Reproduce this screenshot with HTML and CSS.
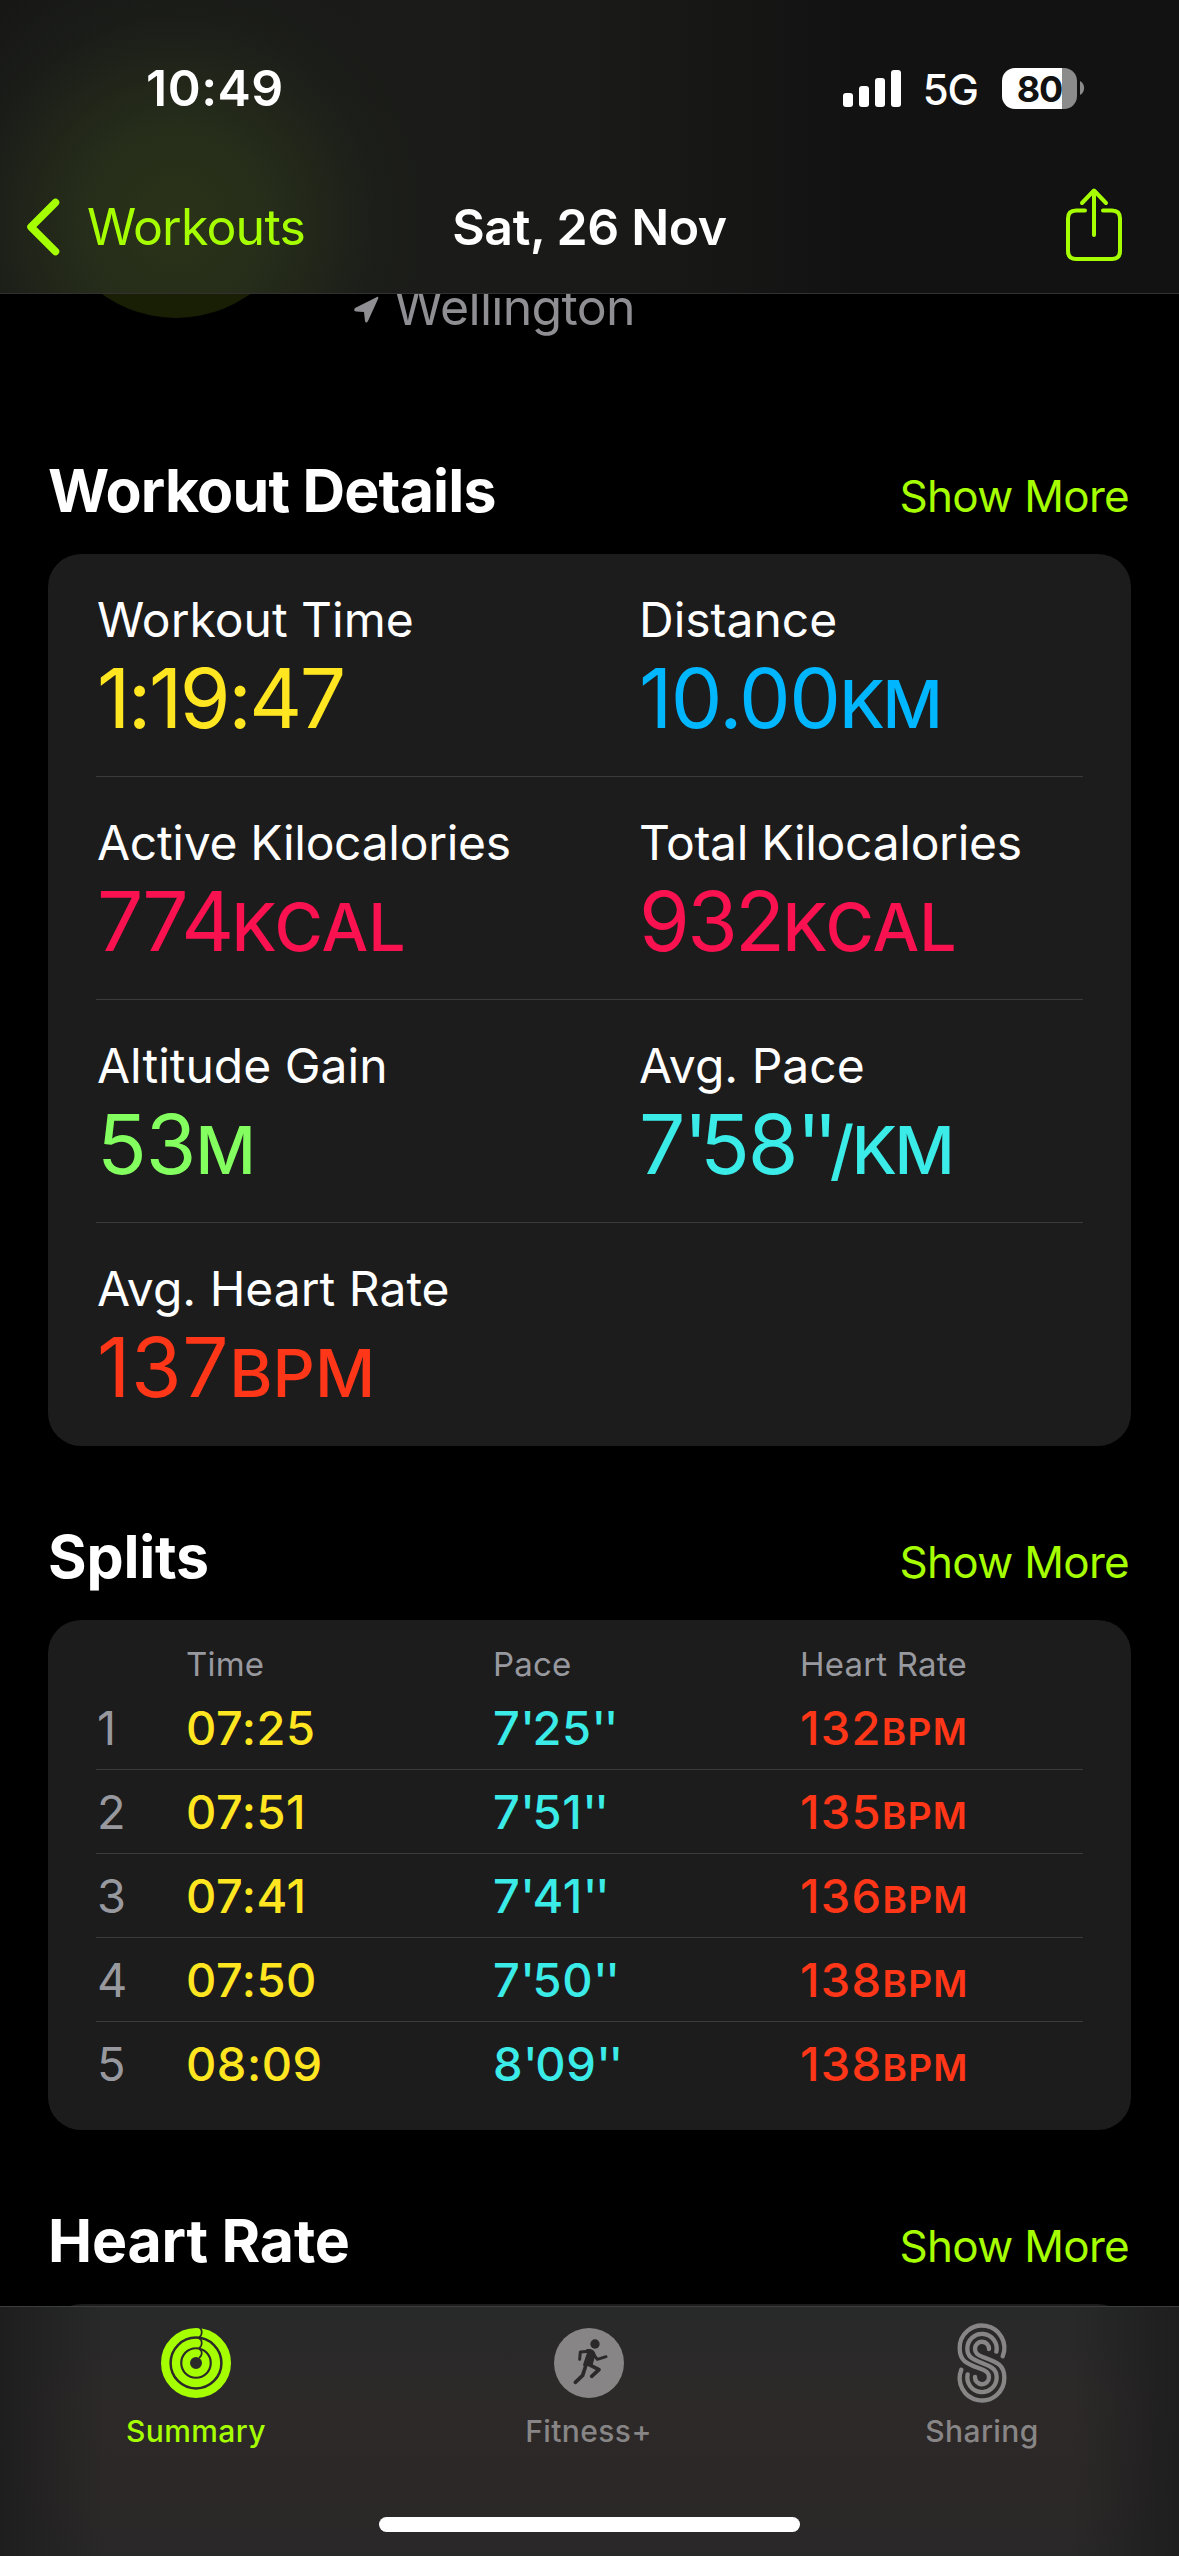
FILE: index.html
```html
<!DOCTYPE html>
<html lang="en">
<head>
    <meta charset="UTF-8">
    <meta name="viewport" content="width=device-width, initial-scale=1.0">
    <title>Workout Summary</title>
    <link rel="stylesheet" href="styles.css">
</head>
<body>
    <div class="topBar">
        <div class="statusBar">
            <span class="clock">10:49</span>
            <div class="statusIcons">
                <svg class="signal" viewBox="0 0 58 38">
                    <rect x="0" y="24" width="10" height="14" rx="3"/>
                    <rect x="16" y="17" width="10" height="21" rx="3"/>
                    <rect x="32" y="9" width="10" height="29" rx="3"/>
                    <rect x="48" y="1" width="10" height="37" rx="3"/>
                </svg>
                <span class="network">5G</span>
                <div class="battery"><span>80</span></div>
                <svg class="batteryTip" viewBox="0 0 4 14"><path d="M0 0 C5.500 3 5.500 11 0 14 Z"/></svg>
            </div>
        </div>
        <div class="navBar">
            <a class="back">
                <svg viewBox="0 0 34 58"><path d="M29.500 4.500 L5 29 L29.500 53.500"/></svg>
                <span>Workouts</span>
            </a>
            <h1>Sat, 26 Nov</h1>
            <svg class="share" viewBox="0 0 58 76">
                <path d="M20 23.500 H11 Q3 23.500 3 31.500 V64 Q3 72 11 72 H47 Q55 72 55 64 V31.500 Q55 23.500 47 23.500 H38"/>
                <path d="M29 48 V4 M17 16 L29 3.500 L41 16"/>
            </svg>
        </div>
    </div>

    <div class="container">
        <div class="location">
            <div class="badge"></div>
            <svg viewBox="0 0 26 28"><path d="M24 1 L2 12 Q0 15 3 15.500 L11 16 L12 25 Q13 28 15 25 L25 3 Q26 0 24 1 Z"/></svg>
            <span>Wellington</span>
        </div>

        <div class="heading">
            <h2 class="detailsTitle">Workout Details</h2>
            <a>Show More</a>
        </div>
        <div class="card details">
            <div class="row">
                <div><p class="label">Workout Time</p><p class="value yellow">1:19:47</p></div>
                <div><p class="label">Distance</p><p class="value blue">10.00<small>KM</small></p></div>
            </div>
            <div class="row">
                <div><p class="label kcal">Active Kilocalories</p><p class="value pink">774<small>KCAL</small></p></div>
                <div><p class="label kcal">Total Kilocalories</p><p class="value pink">932<small>KCAL</small></p></div>
            </div>
            <div class="row">
                <div><p class="label">Altitude Gain</p><p class="value green">53<small>M</small></p></div>
                <div><p class="label">Avg. Pace</p><p class="value cyan">7<i>'</i>58<i>''</i><small>/KM</small></p></div>
            </div>
            <div class="row">
                <div><p class="label">Avg. Heart Rate</p><p class="value red">137<small>BPM</small></p></div>
            </div>
        </div>

        <div class="heading">
            <h2>Splits</h2>
            <a>Show More</a>
        </div>
        <div class="card splits">
            <div class="splitHead"><span></span><span>Time</span><span>Pace</span><span>Heart Rate</span></div>
            <div class="split"><span class="index">1</span><span class="yellow">07:25</span><span class="cyan">7<i>'</i>25<i>''</i></span><span class="red">132<small>BPM</small></span></div>
            <div class="split"><span class="index">2</span><span class="yellow">07:51</span><span class="cyan">7<i>'</i>51<i>''</i></span><span class="red">135<small>BPM</small></span></div>
            <div class="split"><span class="index">3</span><span class="yellow">07:41</span><span class="cyan">7<i>'</i>41<i>''</i></span><span class="red">136<small>BPM</small></span></div>
            <div class="split"><span class="index">4</span><span class="yellow">07:50</span><span class="cyan">7<i>'</i>50<i>''</i></span><span class="red">138<small>BPM</small></span></div>
            <div class="split"><span class="index">5</span><span class="yellow">08:09</span><span class="cyan">8<i>'</i>09<i>''</i></span><span class="red">138<small>BPM</small></span></div>
        </div>

        <div class="heading">
            <h2>Heart Rate</h2>
            <a>Show More</a>
        </div>
        <div class="card chart"></div>
    </div>

    <div class="tabBar">
        <div class="tabs">
            <div class="tab active">
                <!-- three closed activity rings -->
                <svg viewBox="-120 -120 240 240">
                    <g class="rings">
                        <circle r="92.500" stroke-width="25"/>
                        <circle r="60" stroke-width="25"/>
                        <circle r="29.500" stroke-width="23"/>
                    </g>
                    <g class="seams">
                        <path d="M9 -108 C20 -101 20 -84 9 -77"/>
                        <path d="M9 -74 C20 -69 20 -52 9 -45"/>
                        <path d="M9 -43 C20 -38 20 -22 9 -15"/>
                    </g>
                </svg>
                <span>Summary</span>
            </div>
            <div class="tab">
                <svg viewBox="-120 -120 240 240">
                    <circle r="105"/>
                    <g class="runner">
                        <circle cx="18" cy="-57" r="14"/>
                        <path class="body" d="M-6 -40 Q14 -42 18 -26 L8 8 L-16 6 L-4 -30 Z"/>
                        <path d="M-28 -11 L-26 -33 L0 -35"/>
                        <path d="M12 -28 L25 -11 L51 -19"/>
                        <path class="leg" d="M-1 4 L30 20 L8 40"/>
                        <path class="leg" d="M-9 6 L-19 37 L-41 58"/>
                    </g>
                </svg>
                <span>Fitness+</span>
            </div>
            <div class="tab">
                <svg viewBox="-120 -120 240 240">
                    <g class="swirl">
                        <path d="M62 -20 A67 67 0 1 0 -67 -43.500 C-67 -4 -42 3 -4 17.500 C14 24 21 30 21 43.500 A21 21 0 0 1 -21 42"/>
                        <path d="M43 -34 A44 44 0 1 0 -44 -43.500 C-44 -20 -32 -12 0 0 C32 12 44 20 44 43.500 A44 44 0 1 1 -43 34"/>
                        <path d="M21 -42 A21 21 0 0 0 -21 -43.500 C-21 -30 -14 -24 4 -17.500 C42 -3 67 4 67 43.500 A67 67 0 1 1 -62 20"/>
                    </g>
                </svg>
                <span>Sharing</span>
            </div>
        </div>
        <div class="homeIndicator"></div>
    </div>
</body>
</html>
```
FILE: styles.css
```css
*{
    margin: 0px;
    padding: 0px;
    box-sizing: border-box;
}
body{
    width: 1179px;
    height: 2556px;
    overflow: hidden;
    background-color: black;
    color: white;
    font-family: Inter, "Liberation Sans", sans-serif;
}
svg{
    display: block;
    overflow: visible;
}

/* header */
.topBar{
    position: fixed;
    top: 0px;
    left: 0px;
    z-index: 2;
    width: 1179px;
    height: 294px;
    border-bottom: 1px solid #303130;
    background: radial-gradient(ellipse 270px 270px at 176px 220px, #2a3318 0%, #262d1a 35%, rgba(29, 31, 26, 0.6) 75%, transparent 100%),
                linear-gradient(90deg, #171816 0px, #1b1c19 420px, #191a18 620px, #121212 850px);
}
.statusBar{
    display: flex;
    justify-content: space-between;
    height: 160px;
    padding: 57px 95px 0px 146px;
}
.clock{
    font-size: 50px;
    font-weight: 600;
    line-height: 62px;
    letter-spacing: 0.5px;
}
.statusIcons{
    display: flex;
    align-items: center;
    height: 62px;
}
.signal{
    width: 58px;
    height: 38px;
    fill: white;
}
.network{
    margin: 3px 24px 0px 22px;
    font-size: 42px;
    font-weight: 500;
    letter-spacing: -1px;
}
.battery{
    width: 75px;
    height: 41px;
    border-radius: 13px;
    background: linear-gradient(90deg, white 60px, #8b8b8b 60px);
    color: #121212;
    font-size: 36px;
    font-weight: 700;
    line-height: 42px;
    text-align: center;
    letter-spacing: -1px;
}
.batteryTip{
    width: 4px;
    height: 14px;
    margin-left: 3px;
    fill: #8b8b8b;
}
.navBar{
    display: grid;
    grid-template-columns: 1fr auto 1fr;
    align-items: center;
    height: 133px;
    padding: 0px 26px;
}
.back{
    display: flex;
    align-items: center;
    color: #a6ff00;
    font-size: 50px;
    line-height: 62px;
    letter-spacing: -0.8px;
}
.back svg{
    width: 34px;
    height: 58px;
    margin-right: 27px;
    fill: none;
    stroke: #a6ff00;
    stroke-width: 7.5;
    stroke-linecap: round;
    stroke-linejoin: round;
}
h1{
    font-size: 50px;
    font-weight: 600;
    line-height: 62px;
    letter-spacing: -0.4px;
}
.share{
    justify-self: end;
    width: 58px;
    height: 76px;
    margin: 0px 30px 3px 0px;
    fill: none;
    stroke: #a6ff00;
    stroke-width: 4;
    stroke-linecap: round;
    stroke-linejoin: round;
}

/* page content, scrolled up behind the header */
.container{
    padding: 191px 48px 0px 48px;
}
.location{
    display: flex;
    height: 189px;
    color: #8e8e93;
    font-size: 50px;
    letter-spacing: -0.7px;
}
.location .badge{
    width: 254px;
    height: 127px;
    margin-left: 1px;
    border-radius: 0px 0px 127px 127px;
    background-color: #181f04;
}
.location svg{
    width: 26px;
    height: 28px;
    margin: 105px 15px 0px 50px;
    fill: #8e8e93;
}
.location span{
    margin-top: 85px;
    line-height: 62px;
}
.heading{
    display: flex;
    justify-content: space-between;
    align-items: baseline;
    height: 174px;
    padding: 76px 2px 0px 0px;
}
h2{
    font-size: 59px;
    font-weight: 700;
    line-height: 70px;
    letter-spacing: -0.2px;
}
.detailsTitle{
    letter-spacing: -0.8px;
}
.heading a{
    color: #a6ff00;
    font-size: 44px;
    letter-spacing: -0.7px;
}
.card{
    border-radius: 33px;
    background-color: #1c1c1c;
    padding: 0px 48px;
}
.row{
    display: grid;
    grid-template-columns: 542px 1fr;
    height: 223px;
    padding-top: 36px;
    border-bottom: 1px solid #3b3b3b;
}
.row:last-child{
    border-bottom: none;
}
.label{
    padding-left: 1px;
    font-size: 48px;
    line-height: 60px;
}
.kcal{
    letter-spacing: -0.3px;
}
.value{
    margin-top: 4px;
    padding-left: 1px;
    font-size: 82px;
    line-height: 90px;
}
.value small{
    font-size: 66px;
    font-weight: 500;
    letter-spacing: 0px;
}
.yellow{
    color: #ffe620;
}
.blue{
    color: #00b7ff;
}
.pink{
    color: #fa114f;
}
.green{
    color: #83ff5f;
}
.cyan{
    color: #3aebe7;
}
.red{
    color: #ff3617;
}
/* minute and second marks sit close to the digits */
i{
    font-style: normal;
}
.value.yellow{
    letter-spacing: -2.5px;
}
.value.blue{
    letter-spacing: -1.5px;
}
.value.pink{
    letter-spacing: -2.7px;
}
.value.green{
    letter-spacing: -1px;
}
.value.cyan{
    letter-spacing: -2px;
}
.value.red{
    letter-spacing: 0.6px;
}
.value.cyan i{
    letter-spacing: -8px;
}
.value.blue small , .value.cyan small{
    letter-spacing: -2.5px;
}

/* splits table */
.splits{
    height: 510px;
    padding-top: 24px;
}
.splitHead , .split{
    display: grid;
    grid-template-columns: 90px 307px 307px 1fr;
}
.splitHead{
    height: 42px;
    color: #98989f;
    font-size: 33px;
    line-height: 40px;
    letter-spacing: 0.2px;
}
.split{
    height: 84px;
    border-bottom: 1px solid #3b3b3b;
    font-size: 47px;
    font-weight: 500;
    line-height: 84px;
    letter-spacing: 0.5px;
}
.split:last-child{
    border-bottom: none;
}
.split i{
    letter-spacing: -2.5px;
}
.split .red{
    letter-spacing: 1.3px;
}
.split small{
    font-size: 37px;
    font-weight: 600;
}
.index{
    padding-left: 1px;
    color: #98989f;
    font-weight: 400;
}
.chart{
    height: 240px;
}

/* bottom tabs */
.tabBar{
    position: fixed;
    top: 2306px;
    left: 0px;
    z-index: 2;
    width: 1179px;
    height: 250px;
    border-top: 1px solid #3d3d3d;
    background: linear-gradient(90deg, rgba(29, 29, 29, 0.9) 0%, transparent 9%, transparent 91%, rgba(29, 29, 29, 0.9) 100%),
                linear-gradient(180deg, #282929 0%, #2d2929 40%, #2c2828 75%, #292828 100%);
}
.tabs{
    display: grid;
    grid-template-columns: 392px 393px 394px;
    height: 210px;
    padding-top: 16px;
}
.tab{
    display: flex;
    flex-direction: column;
    align-items: center;
    color: #878585;
    fill: #878585;
    font-size: 30px;
    font-weight: 500;
    line-height: 40px;
    letter-spacing: 0.4px;
}
.tab svg{
    width: 80px;
    height: 80px;
}
.tab span{
    margin-top: 8px;
}
.active{
    color: #a6ff00;
}
.rings{
    fill: none;
    stroke: #a6ff00;
}
.seams{
    fill: none;
    stroke: #2a2828;
    stroke-width: 5;
}
.runner{
    fill: #2b2929;
    stroke: none;
}
.runner path{
    fill: none;
    stroke: #2b2929;
    stroke-width: 9;
    stroke-linecap: round;
    stroke-linejoin: round;
}
.runner .body{
    fill: #2b2929;
    stroke-width: 4;
}
.runner .leg{
    stroke-width: 11;
}
.swirl{
    fill: none;
    stroke: #878585;
    stroke-width: 13;
    stroke-linecap: round;
}
.homeIndicator{
    width: 421px;
    height: 15px;
    margin: 0px auto;
    border-radius: 8px;
    background-color: white;
}
```
